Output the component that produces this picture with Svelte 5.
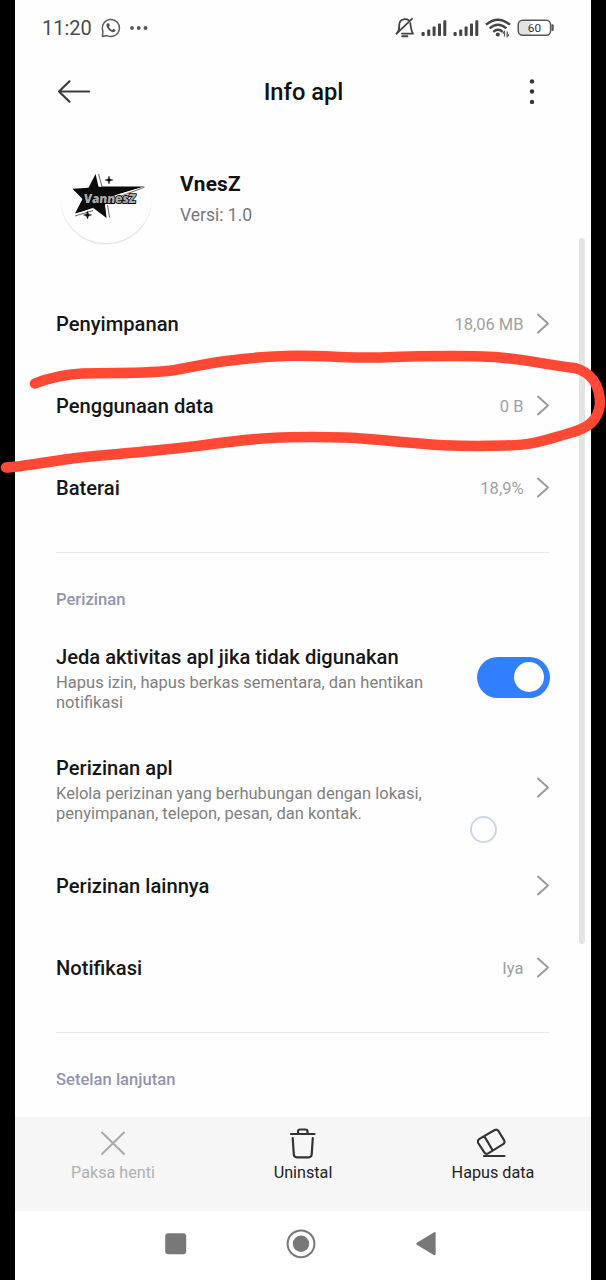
<script>
  const usage = [
    { title: 'Penyimpanan', value: '18,06 MB' },
    { title: 'Penggunaan data', value: '0 B' },
    { title: 'Baterai', value: '18,9%' },
  ];
  const more = [
    { title: 'Perizinan lainnya', value: '' },
    { title: 'Notifikasi', value: 'Iya' },
  ];
</script>

{#snippet chevron()}
  <svg class="chevron" width="14" height="22" viewBox="0 0 14 22"><path d="M2 1.5 L12 10.5 L2 19.5" /></svg>
{/snippet}

{#snippet signal()}
  <svg width="26" height="18" viewBox="0 0 26 18" fill="#444">
    <rect x="0.5" y="13" width="3.2" height="4" rx="1" />
    <rect x="6.2" y="10.5" width="3" height="6.5" rx=".8" />
    <rect x="11.6" y="7.5" width="3" height="9.5" rx=".8" />
    <rect x="17" y="4.5" width="3" height="12.5" rx=".8" />
    <rect x="22.3" y="1.2" width="3" height="15.8" rx=".8" />
  </svg>
{/snippet}

{#snippet row(item)}
  <div class="row">
    <span class="title">{item.title}</span>
    <span class="value">{item.value}</span>
    {@render chevron()}
  </div>
{/snippet}

<div class="screen">
  <main class="phone">
    <div class="status">
      <span class="time">11:20</span>
      <svg class="whatsapp" width="20" height="20" viewBox="0 0 20 20">
        <path d="M1.5 18.4 L1.9 13 A8.5 8.5 0 1 1 6 17.6 Z" fill="none" stroke="#5c5c5c" stroke-width="1.5" stroke-linejoin="round" />
        <path d="M6.8 5.2 C5.3 5.6 5 7.4 6 9.2 C7.3 11.7 9.3 13.5 11.6 14 C13.2 14.3 14.6 13.5 14.6 12 L12.4 10.8 L11.2 12 C9.8 11.5 8.6 10.3 8 9 L8.9 7.8 L8 5.3 Z" fill="#555" />
      </svg>
      <svg class="more" width="18" height="4" viewBox="0 0 18 4" fill="#555"><circle cx="2" cy="2" r="1.9" /><circle cx="8.7" cy="2" r="1.9" /><circle cx="15.5" cy="2" r="1.9" /></svg>
      <div class="indicators">
        <svg width="20" height="22" viewBox="0 0 20 22" fill="none" stroke="#444" stroke-width="1.8" stroke-linecap="round" stroke-linejoin="round">
          <path d="M4.2 11.5 V8.2 C4.2 4.8 6.2 2.4 9.8 2.1 C11.2 2 12.6 2.4 13.6 3.2" />
          <path d="M15.3 6.2 C15.8 9.8 15.6 12.4 18 16.6 H7" />
          <path d="M17 1.8 L1.4 16.8 C3.2 14.6 4 13.2 4.2 11" />
          <path d="M7.2 19.2 H12.4" stroke-width="2" />
        </svg>
        {@render signal()}
        {@render signal()}
        <svg width="26" height="20" viewBox="0 0 26 20">
          <g fill="none" stroke="#444" stroke-width="2.3">
            <path d="M1 6.7 Q13 -3.3 25 6.7" />
            <path d="M4.6 10.3 Q13 3.2 21.4 10.3" />
            <path d="M8.2 13.8 Q13 9.8 17.8 13.8" />
          </g>
          <circle cx="12.8" cy="16.4" r="2" fill="#444" />
          <path d="M19.5 18.5 V13.5 L17.7 15.5 M22.2 13.5 V18.5 L24 16.5" fill="none" stroke="#555" stroke-width="1.2" />
        </svg>
        <svg width="38" height="18" viewBox="0 0 38 18">
          <rect x="2" y="2" width="12" height="14" rx="3" fill="#e2e2e2" />
          <rect x="1.2" y="1.2" width="32.4" height="15" rx="4.4" fill="none" stroke="#555" stroke-width="1.5" />
          <path d="M35.6 6.3 V11" stroke="#555" stroke-width="2.2" stroke-linecap="round" />
          <text x="17.4" y="12.9" text-anchor="middle" font-size="11.8" fill="#333">60</text>
        </svg>
      </div>
    </div>

    <header>
      <svg width="34" height="24" viewBox="0 0 34 24" fill="none" stroke="#3c3c3c" stroke-width="2.2" stroke-linecap="round" stroke-linejoin="round"><path d="M32 11.5 H2 M12.5 1.3 L2 11.5 L12.5 21.7" /></svg>
      <h1>Info apl</h1>
      <svg width="6" height="26" viewBox="0 0 6 26" fill="#333"><circle cx="3" cy="2.4" r="2.2" /><circle cx="3" cy="12.5" r="2.2" /><circle cx="3" cy="22.9" r="2.2" /></svg>
    </header>

    <section class="app">
      <svg width="96" height="96" viewBox="58 150 96 96">
        <circle cx="106" cy="198.4" r="46" fill="#e6e6e6" />
        <circle cx="106" cy="197" r="46" fill="#fefefe" />
        <path d="M95.6 174 L98.4 186.5 L144.5 186.6 L118 194.5 L105 203 L106.5 218 L94 208.5 L75 213.5 L82.5 199 L72.5 188.8 L88.5 187.8 Z" fill="#0b0b0b" />
        <path d="M97.6 173.8 L100.4 187 M143 187.6 L112 197 M105.8 205 L108.2 218.2 M93.5 208.5 L75 214.8" fill="none" stroke="#fefefe" stroke-width="1.4" />
        <path d="M98.6 174 L102 186.5 M144.5 187.2 L118 197.2 M107.5 205 L109.5 217.5 M93 210.5 L75 216" fill="none" stroke="#444" stroke-width=".8" />
        <path d="M109 176 L109.9 179 L113 180 L109.9 181 L109 184 L108.1 181 L105 180 L108.1 179 Z M87.5 211 L88.5 214 L91.5 215 L88.5 216 L87.5 219 L86.5 216 L83.5 215 L86.5 214 Z" fill="#111" stroke="#111" stroke-width=".4" />
        <text x="0" y="0" transform="translate(83.5 203.3) skewX(-5)" class="wordmark" textLength="52" lengthAdjust="spacingAndGlyphs">VannesZ</text>
      </svg>
      <div>
        <h2>VnesZ</h2>
        <p>Versi: 1.0</p>
      </div>
    </section>

    {#each usage as item}{@render row(item)}{/each}

    <hr />
    <h3>Perizinan</h3>

    <div class="row detail pause">
      <div class="text">
        <span class="title">Jeda aktivitas apl jika tidak digunakan</span>
        <p>Hapus izin, hapus berkas sementara, dan hentikan<br />notifikasi</p>
      </div>
      <div class="switch"><i></i></div>
    </div>
    <div class="row detail perms">
      <div class="text">
        <span class="title">Perizinan apl</span>
        <p>Kelola perizinan yang berhubungan dengan lokasi,<br />penyimpanan, telepon, pesan, dan kontak.</p>
      </div>
      {@render chevron()}
    </div>

    {#each more as item}{@render row(item)}{/each}

    <hr />
    <h3>Setelan lanjutan</h3>

    <footer>
      <div class="action disabled">
        <svg width="32" height="32" viewBox="0 0 32 32" fill="none" stroke="#a9a9a9" stroke-width="2" stroke-linecap="round"><path d="M5 5.5 L27 27 M27 5.5 L5 27" /></svg>
        <span>Paksa henti</span>
      </div>
      <div class="action">
        <svg width="32" height="32" viewBox="0 0 32 32" fill="none" stroke="#333" stroke-width="2.2" stroke-linecap="round" stroke-linejoin="round">
          <path d="M4 7 H27.5 M11 6.8 V4.5 Q11 2.5 13 2.5 H18.5 Q20.5 2.5 20.5 4.5 V6.8" /><path d="M5.7 11 L6.8 27.5 Q7.1 30.3 9.8 30.3 H21.7 Q24.4 30.3 24.7 27.5 L25.8 11" />
        </svg>
        <span>Uninstal</span>
      </div>
      <div class="action">
        <svg width="32" height="32" viewBox="0 0 32 32" fill="none" stroke="#333" stroke-width="2.1" stroke-linecap="round" stroke-linejoin="round">
          <path d="M2.8 12.2 L18.5 3 Q20.7 1.9 22.2 3.9 L28 13.4 Q29 15.7 27 17.2 L12 26.4 Q9.7 27.6 8.3 25.6 L2 16 Q1 13.8 2.8 12.2 Z M8.1 9.3 L16.5 23.4" transform="translate(-.8 0)" /><path d="M7 29 H27.5" />
        </svg>
        <span>Hapus data</span>
      </div>
    </footer>

    <nav>
      <svg width="32" height="32" viewBox="0 0 32 32" fill="#787878"><rect x="5.2" y="5.2" width="21" height="21" rx="3" /></svg>
      <svg width="32" height="32" viewBox="0 0 32 32"><circle cx="16" cy="15.8" r="13.4" fill="none" stroke="#787878" stroke-width="2" /><circle cx="16" cy="15.8" r="8.2" fill="#787878" /></svg>
      <svg width="32" height="32" viewBox="0 0 32 32" fill="#787878"><path d="M6.8 14.8 L24.2 4.2 Q25.6 3.8 25.6 5.2 V26.2 Q25.6 27.6 24.2 27.2 L6.8 16.8 Q5.8 15.8 6.8 14.8 Z" /></svg>
    </nav>
  </main>

  <div class="scrollbar"></div>
  <div class="touch"></div>
  <svg class="marker" width="606" height="1280" viewBox="0 0 606 1280">
    <path d="M35 383.5 C50 377.5 62 374.5 82 373.5 C115 372 145 374.5 175 370 C210 363 240 357.5 285 356 C320 355 345 358 380 357.5 C425 356 475 355 505 358 C535 361 553 366 575 368 C590 372 600 384 600 404 C598 421 588 428 570 433 C545 440 535 445 505 445.5 C430 448 400 440 345 437.5 C285 436 255 438 205 445 C150 452 110 454 65 459.5 C40 463 20 467 6 467.5" />
  </svg>
</div>

<style>
  :global(body) { margin: 0; background: #000; }
  .screen { position: relative; width: 606px; height: 1280px; overflow: hidden; background: #000; font-family: Roboto, sans-serif; }
  .phone { display: flex; flex-direction: column; width: 576px; height: 1280px; margin-left: 15px; background: #fefefe; }
  svg { flex: none; display: block; }
  h1, h2, h3, p { margin: 0; font-weight: 400; }

  .status { display: flex; align-items: center; height: 56px; flex: none; padding: 0 36px 0 27px; }
  .time { font-size: 20px; color: #4b4b4b; }
  .whatsapp { margin: -1px 0 0 9px; }
  .more { margin: -1px 0 0 9px; }
  .indicators { display: flex; align-items: center; gap: 6px; margin-left: auto; }

  header { display: flex; align-items: center; justify-content: space-between; height: 72px; flex: none; padding: 0 56px 0 42px; }
  h1 { font-size: 23.7px; font-weight: 500; color: #111; margin-left: -13px; }

  .app { display: flex; align-items: flex-start; gap: 26px; height: 155px; flex: none; box-sizing: border-box; padding: 22px 0 0 43px; }
  .app h2 { margin-top: 21px; font-size: 20.8px; line-height: 26px; font-weight: 700; color: #111; letter-spacing: .2px; }
  .app p { margin-top: 7px; font-size: 17.5px; line-height: 22px; color: #777; }
  .wordmark { font: 800 12.5px "Open Sans", sans-serif; fill: #aaa; stroke: #050505; stroke-width: 1.8px; paint-order: stroke; }

  .row { display: flex; align-items: center; height: 82px; flex: none; padding: 0 41px; }
  .title { font-size: 20.15px; line-height: 26px; font-weight: 500; color: #161616; }
  .value { margin-left: auto; margin-right: 12.5px; font-size: 16.5px; color: #a0a0a0; }
  .chevron { fill: none; stroke: #999; stroke-width: 1.9; stroke-linecap: round; stroke-linejoin: round; }
  .detail { justify-content: space-between; height: 82px; }
  .detail .text { padding-top: 3px; }
  .detail .title { display: block; }
  .detail p { margin-top: 3px; font-size: 16.53px; line-height: 20px; color: #808080; white-space: nowrap; }
  .pause { margin-top: 22px; }
  .perms { margin: 29px 0 16px; }

  hr { width: 494px; height: 1px; margin: 23px 41px 33px; flex: none; border: 0; background: #e9e9e9; }
  h3 { flex: none; height: 28px; line-height: 28px; padding-left: 41px; font-size: 16.6px; font-weight: 500; color: #9293b0; }

  .switch { display: flex; justify-content: flex-end; align-items: center; width: 73px; height: 41px; box-sizing: border-box; padding-right: 6px; border-radius: 21px; background: #317fff; }
  .switch i { width: 30px; height: 30px; border-radius: 50%; background: #fefefe; }

  footer { display: flex; justify-content: space-between; height: 94px; flex: none; margin-top: auto; padding: 0 20px; background: #f6f6f6; }
  .action { display: flex; flex-direction: column; align-items: center; width: 156px; padding-top: 10px; font-size: 16.2px; line-height: 22px; color: #222; }
  .action span { margin-top: 3px; }
  .disabled { color: #b0b0b0; }

  nav { display: flex; justify-content: space-between; height: 69px; flex: none; box-sizing: border-box; padding: 17px 149px 0 145px; background: #fff; }

  .scrollbar { position: absolute; left: 579px; top: 238px; width: 6px; height: 706px; border-radius: 3px; background: #e4e4e4; }
  .touch { position: absolute; left: 470px; top: 816px; width: 27px; height: 27px; box-sizing: border-box; border: 2px solid #cfd7e6; border-radius: 50%; }
  .marker { position: absolute; left: 0; top: 0; fill: none; stroke: #ff4935; stroke-width: 10.5; stroke-linecap: round; stroke-linejoin: round; }
</style>
